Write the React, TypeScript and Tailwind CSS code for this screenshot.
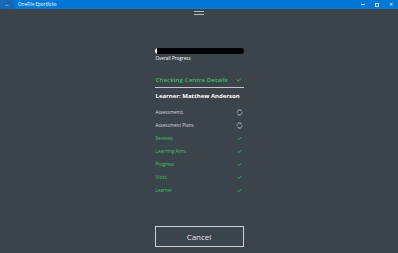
import { Check } from 'lucide-react'

const font = { fontFamily: '"Open Sans", "Noto Sans", sans-serif' }

type Item = { label: string; done: boolean }

const items: Item[] = [
  { label: 'Assessments', done: false },
  { label: 'Assessment Plans', done: false },
  { label: 'Reviews', done: true },
  { label: 'Learning Aims', done: true },
  { label: 'Progress', done: true },
  { label: 'Visits', done: true },
  { label: 'Learner', done: true },
]

function SyncIcon() {
  return (
    <svg width="7" height="7" viewBox="0 0 14 14" fill="none">
      <path d="M3.2 3.6 A5 5 0 0 1 11 4" stroke="#d0d0d0" strokeWidth="2" />
      <path d="M10.8 10.4 A5 5 0 0 1 3 10" stroke="#d0d0d0" strokeWidth="2" />
      <path d="M12 7 A5 5 0 0 1 11.6 9" stroke="#d0d0d0" strokeWidth="2" />
      <path d="M2 7 A5 5 0 0 1 2.4 5" stroke="#d0d0d0" strokeWidth="2" />
    </svg>
  )
}

export default function App() {
  return (
    <div className="w-[398px] h-[253px] bg-[#3b434b] flex flex-col overflow-hidden" style={font}>
      {/* title bar */}
      <div className="h-[9px] bg-[#0078d7] flex items-center text-white">
        <div className="w-[14px] h-full bg-[#1769b8] flex items-center justify-center text-[5px] leading-none">
          ←
        </div>
        <span className="ml-[4px] text-[4.6px] leading-none">OneFile Eportfolio</span>
        <div className="ml-auto flex items-center h-full">
          <div className="w-[14px] flex justify-center">
            <div className="w-[4px] h-px bg-white/80" />
          </div>
          <div className="w-[14px] flex justify-center">
            <div className="w-[4px] h-[4px] border border-white/80" />
          </div>
          <div className="w-[14px] flex justify-center text-[5px] leading-none">✕</div>
        </div>
      </div>

      {/* hamburger */}
      <div className="flex flex-col items-center gap-[2px] pt-[2px]">
        <div className="w-[10px] h-px bg-[#b8b8b8]" />
        <div className="w-[10px] h-px bg-[#b8b8b8]" />
      </div>

      <div className="w-[89px] mx-auto flex flex-col mt-[33px]">
        {/* progress */}
        <div className="h-[6px] rounded-full bg-black flex overflow-hidden">
          <div className="w-[2px] h-full bg-white" />
        </div>
        <div className="text-[4.6px] leading-none text-white mt-[1.5px] pl-px">Overall Progress</div>

        <div className="flex items-center justify-between mt-[17px] pl-px pr-[2px]">
          <span className="text-[6.1px] leading-none font-semibold text-[#3cc35c] tracking-[0.1px] whitespace-nowrap">
            Checking Centre Details
          </span>
          <Check className="w-[6px] h-[6px] text-[#3cc35c]" strokeWidth={3.5} />
        </div>
        <div className="h-px bg-[#c4c4c4] mt-[4px]" />

        <div className="text-[6px] leading-none font-bold text-white mt-[5px] pl-px whitespace-nowrap">
          Learner: Matthew Anderson
        </div>

        <div className="flex flex-col mt-[7px]">
          {items.map((it) => (
            <div key={it.label} className="h-[13px] flex items-center justify-between pl-px pr-[1px]">
              <span
                className={
                  'text-[4.6px] leading-none whitespace-nowrap ' +
                  (it.done ? 'text-[#3cc35c]' : 'text-[#d8d8d8]')
                }
              >
                {it.label}
              </span>
              {it.done ? (
                <Check className="w-[5px] h-[5px] text-[#3cc35c] mr-[1px]" strokeWidth={4} />
              ) : (
                <SyncIcon />
              )}
            </div>
          ))}
        </div>

        <button className="mt-[29px] h-[21px] border border-[#cfcfcf] text-[8px] text-[#e8e8e8] flex items-center justify-center">
          Cancel
        </button>
      </div>
    </div>
  )
}
